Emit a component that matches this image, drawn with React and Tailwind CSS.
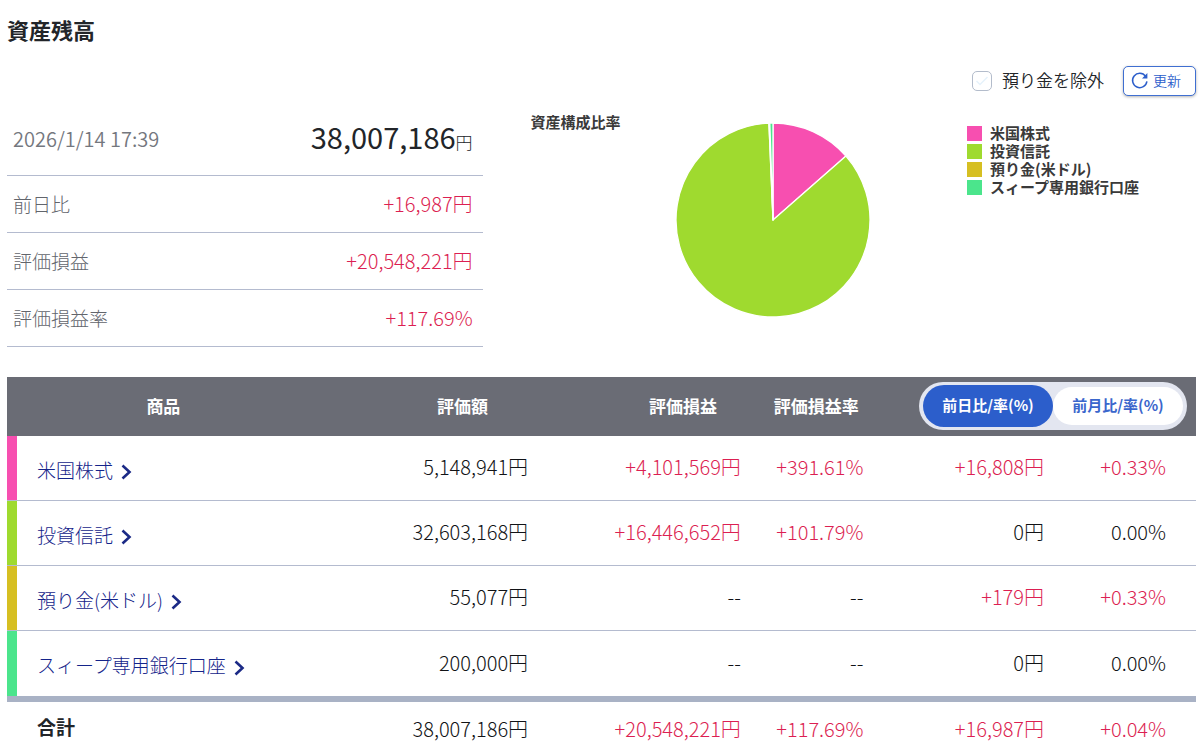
const PINK = '#f74fb0';
const LIME = '#9fda2f';
const GOLD = '#d6bf22';
const MINT = '#4be58c';

const summary = [
  { label: '前日比', value: '+16,987円' },
  { label: '評価損益', value: '+20,548,221円' },
  { label: '評価損益率', value: '+117.69%' },
];

const products = [
  { name: '米国株式', color: PINK, bar: 'bg-[#f74fb0]', amount: 5148941, cells: ['5,148,941円', '+4,101,569円', '+391.61%', '+16,808円', '+0.33%'] },
  { name: '投資信託', color: LIME, bar: 'bg-[#9fda2f]', amount: 32603168, cells: ['32,603,168円', '+16,446,652円', '+101.79%', '0円', '0.00%'] },
  { name: '預り金(米ドル)', color: GOLD, bar: 'bg-[#d6bf22]', amount: 55077, cells: ['55,077円', '--', '--', '+179円', '+0.33%'] },
  { name: 'スィープ専用銀行口座', color: MINT, bar: 'bg-[#4be58c]', amount: 200000, cells: ['200,000円', '--', '--', '0円', '0.00%'] },
];

const total = ['38,007,186円', '+20,548,221円', '+117.69%', '+16,987円', '+0.04%'];

const cellPadding = ['pr-[77px]', 'pr-5', 'pr-2', 'pr-5', 'pr-[30px]'];

const tone = (value) => (value.startsWith('+') ? 'text-[#dc1f52]' : 'text-[#111316]');

function Pie() {
  const sum = products.reduce((acc, p) => acc + p.amount, 0);
  const point = (share) => {
    const angle = share * 2 * Math.PI;
    return `${98 + 97 * Math.sin(angle)} ${98 - 97 * Math.cos(angle)}`;
  };
  let start = 0;
  const slices = products.map((p) => {
    const end = start + p.amount / sum;
    const d = `M98 98L${point(start)}A97 97 0 ${end - start > 0.5 ? 1 : 0} 1 ${point(end)}Z`;
    start = end;
    return { d, color: p.color };
  });
  return (
    <svg className="size-[196px] shrink-0" viewBox="0 0 196 196" role="img" aria-label="資産構成比率">
      {slices.map((s) => (
        <path key={s.color} d={s.d} fill={s.color} stroke="#fff" strokeWidth="1.3" strokeLinejoin="round" />
      ))}
    </svg>
  );
}

function Chevron() {
  return (
    <svg className="mt-1 h-4 w-3 shrink-0" viewBox="0 0 12 16" fill="none" stroke="#1b2a86" strokeWidth="2.6">
      <path d="M1.5 1.5L8.5 8L1.5 14.5" />
    </svg>
  );
}

function Amounts({ values }) {
  return values.map((value, i) => (
    <td key={i} className={`pb-0.5 text-right text-xl font-light ${cellPadding[i]} ${tone(value)}`}>{value}</td>
  ));
}

export default function App() {
  return (
    <main className="bg-white pr-1 pl-[7px] font-['Noto_Sans_CJK_JP',sans-serif] text-[#222529]">
      <h1 className="pt-[13px] text-[22px] leading-8 font-bold">資産残高</h1>

      <div className="mt-[21px] flex h-[30px] items-center justify-end">
        <label className="flex items-center gap-2.5 text-[17px] font-[350]">
          <span className="grid size-5">
            <input type="checkbox" className="col-start-1 row-start-1 size-5 appearance-none rounded-[5px] border border-[#b3bccb] bg-white" />
            <svg className="pointer-events-none col-start-1 row-start-1 size-5" viewBox="0 0 20 20" fill="none" stroke="#e6f2fb" strokeWidth="1.5">
              <path d="M4.5 10L8 13.5L15.5 6" />
            </svg>
          </span>
          <span className="pb-0.5">預り金を除外</span>
        </label>
        <button type="button" className="ml-[19px] flex h-[30px] w-[73px] items-center gap-1 rounded-[5px] border border-[#3f6fd1] bg-white pl-[7px] text-[14px] font-[350] text-[#2c5ecb] shadow-[0_1px_3px_rgba(0,0,0,0.3)]">
          <svg className="size-[18px] shrink-0" viewBox="0 0 18 18" fill="none" stroke="#2c5ecb" strokeWidth="1.5">
            <path d="M14.6 4.2A7.2 7.2 0 1 0 15.9 9.4" />
            <path d="M16.4 1V6.4H11Z" fill="#2c5ecb" stroke="none" />
          </svg>
          <span className="pb-0.5">更新</span>
        </button>
      </div>

      <div className="mt-[9px] flex items-start">
        <dl className="w-[40%]">
          <div className="flex h-[71px] items-center justify-between border-b border-[#b4bbcf] pr-2.5 pb-0.5 pl-1.5">
            <dt className="text-xl font-[350] text-[#74777e]">2026/1/14 17:39</dt>
            <dd className="text-[29px] leading-9">38,007,186<span className="text-[17px] font-light">円</span></dd>
          </div>
          {summary.map((row) => (
            <div key={row.label} className="flex h-[57px] items-center justify-between border-b border-[#b4bbcf] pr-2.5 pl-1.5">
              <dt className="text-[19px] font-light text-[#62656c]">{row.label}</dt>
              <dd className="text-xl font-light text-[#dc1f52]">{row.value}</dd>
            </div>
          ))}
        </dl>

        <section className="ml-12 flex flex-1 items-start text-[15px] leading-[18px] font-bold text-[#3a3a3a]">
          <h2 className="w-[144px] pt-2">資産構成比率</h2>
          <div className="pt-[17px]"><Pie /></div>
          <ul className="ml-auto w-[229px] pt-[19px]">
            {products.map((p) => (
              <li key={p.name} className="flex h-[18px] items-center gap-2">
                <span className={`size-[15px] ${p.bar}`} />
                {p.name}
              </li>
            ))}
          </ul>
        </section>
      </div>

      <table className="mt-[30px] w-full table-fixed border-separate border-spacing-0 text-[19px]">
        <colgroup>
          <col className="w-[10px]" />
          <col />
          <col className="w-[24%]" />
          <col className="w-[13.1%]" />
          <col className="w-[9.3%]" />
          <col className="w-[16.2%]" />
          <col className="w-[11.1%]" />
        </colgroup>
        <thead>
          <tr className="h-[59px] bg-[#6a6c75] text-[17px] font-bold text-white [&>th]:pb-0.5">
            <th colSpan={2}>商品</th>
            <th>評価額</th>
            <th>評価損益</th>
            <th>評価損益率</th>
            <th colSpan={2} className="pr-[9px]">
              <div className="ml-auto flex h-12 w-[268px] items-center rounded-full bg-[#e3e6f0] p-1 text-[15px]">
                <button type="button" aria-pressed="true" className="h-[42px] w-[130px] rounded-full bg-[#2c5ecb] font-bold text-white">前日比/率(%)</button>
                <button type="button" aria-pressed="false" className="h-[38px] w-[130px] rounded-full bg-white font-bold text-[#3a66cc]">前月比/率(%)</button>
              </div>
            </th>
          </tr>
        </thead>
        <tbody>
          {products.map((p) => (
            <tr key={p.name} className="h-[65px] [&>td]:border-b [&>td]:border-[#b4bbcf] last:[&>td]:border-b-0">
              <td className={p.bar} />
              <td className="pt-1 pl-5">
                <a href="#" className="flex items-center gap-2 whitespace-nowrap font-light text-[#14248a]">
                  {p.name}
                  <Chevron />
                </a>
              </td>
              <Amounts values={p.cells} />
            </tr>
          ))}
        </tbody>
        <tfoot>
          <tr className="h-[57px] [&>*]:border-t-[6px] [&>*]:border-[#a9b2c5] [&>td]:pt-0.5 [&>td]:pb-0">
            <th colSpan={2} className="pl-[30px] text-left font-bold">合計</th>
            <Amounts values={total} />
          </tr>
        </tfoot>
      </table>
    </main>
  );
}
